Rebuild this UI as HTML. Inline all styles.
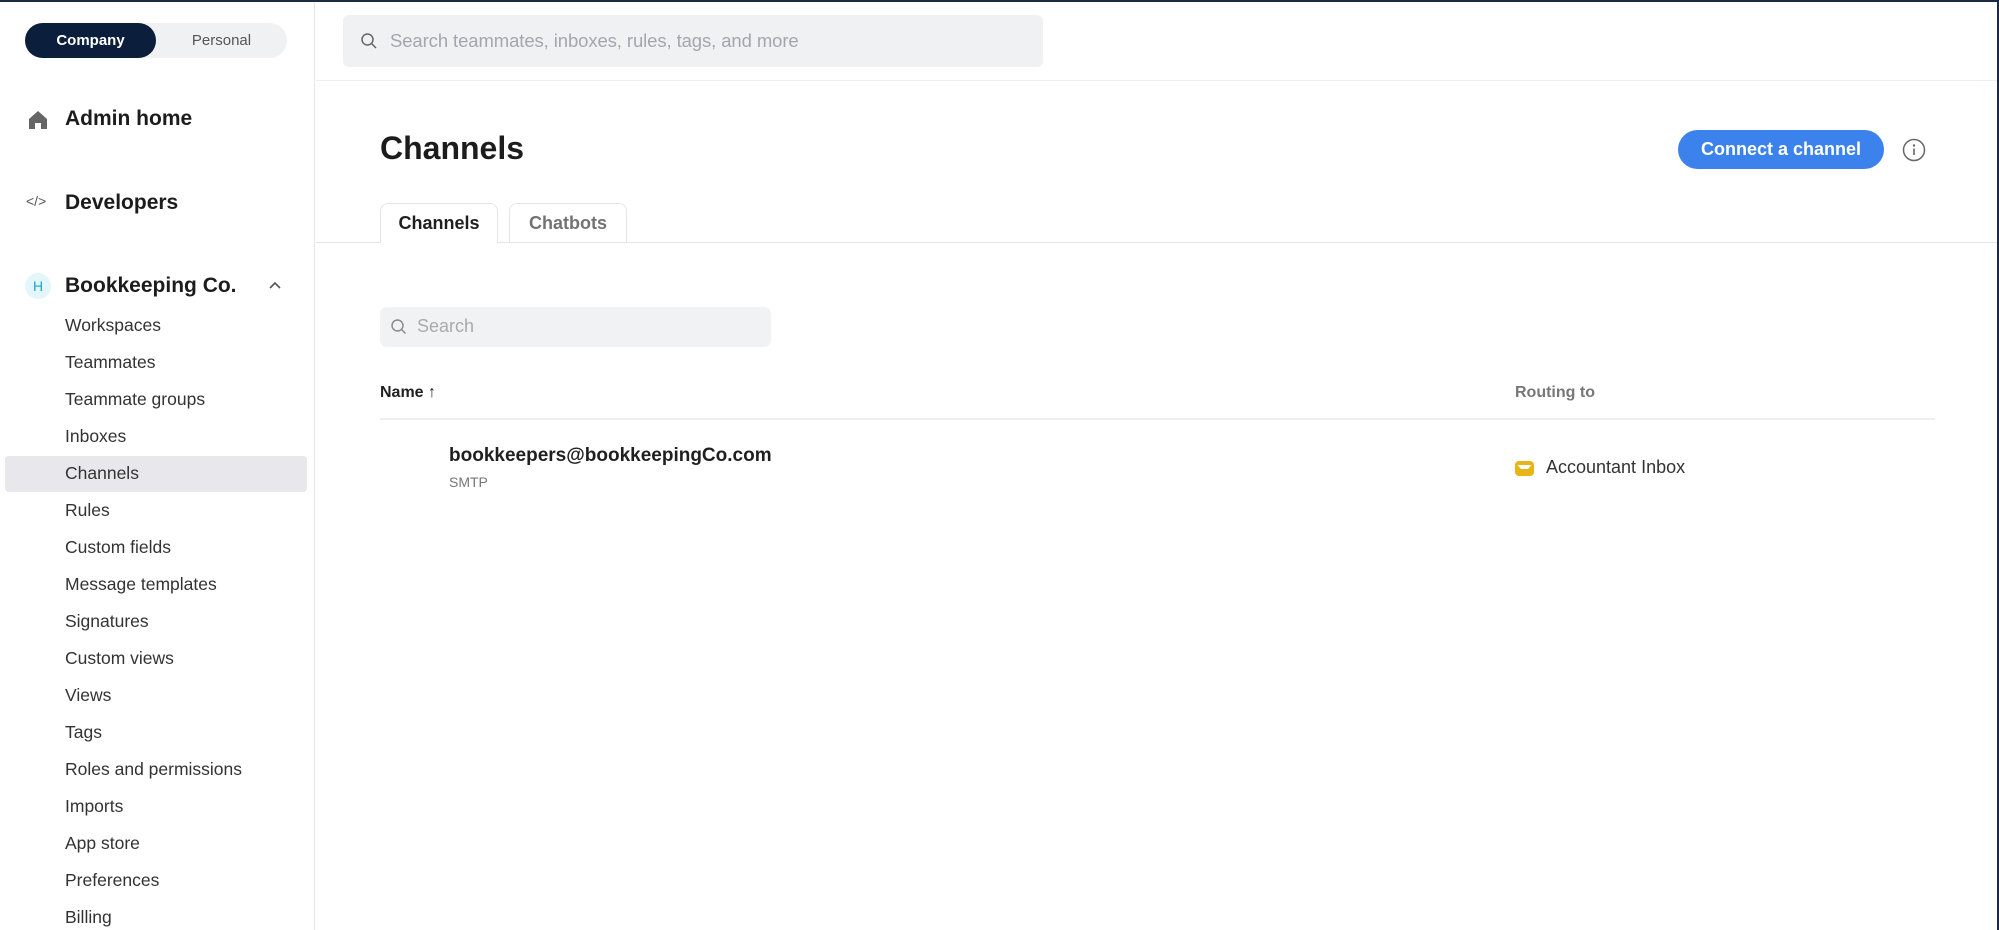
<!DOCTYPE html>
<html><head><meta charset="utf-8"><style>
*{box-sizing:border-box;margin:0;padding:0}
body{width:1999px;height:930px;overflow:hidden;background:#fff;font-family:"Liberation Sans",sans-serif;color:#1f1f1f;position:relative}
.abs{position:absolute}
.side{position:absolute;left:0;top:0;width:315px;height:930px;border-right:1px solid #e6e7ea}
.toggle{left:25px;top:23px;width:262px;height:35px;background:#f0f1f3;border-radius:18px}
.toggle .on{position:absolute;left:0;top:0;width:131px;height:35px;background:#0b1f3d;color:#fff;border-radius:18px;font-size:15px;font-weight:bold;text-align:center;line-height:35px}
.toggle .off{position:absolute;left:131px;top:0;width:131px;height:35px;color:#555;font-size:15px;text-align:center;line-height:35px}
.big{font-size:21px;font-weight:bold;color:#1c1c1c}
.sub{position:absolute;left:65px;font-size:17.5px;color:#333}
.hl{left:5px;top:456px;width:302px;height:36px;background:#e8e8ec;border-radius:4px}
</style></head><body>
<div class="side">
<div class="abs toggle"><div class="on">Company</div><div class="off">Personal</div></div>
<svg class="abs" style="left:27px;top:109px" width="22" height="22" viewBox="0 0 22 22"><path d="M2 10 L11 2 L20 10 V20 H14 V14 H8 V20 H2Z" fill="#666"/></svg>
<div class="abs big" style="left:65px;top:107px">Admin home</div>
<div class="abs" style="left:26px;top:193px;font-size:14px;color:#555">&lt;/&gt;</div>
<div class="abs big" style="left:65px;top:191px">Developers</div>
<div class="abs" style="left:25px;top:273px;width:26px;height:26px;border-radius:13px;background:#e2f6fb;color:#1fa6c4;font-size:14px;text-align:center;line-height:26px">H</div>
<div class="abs big" style="left:65px;top:274px">Bookkeeping Co.</div>
<svg class="abs" style="left:268px;top:280px" width="14" height="10"><path d="M2 8 L7 3 L12 8" stroke="#555" stroke-width="1.6" fill="none"/></svg>
<div class="abs hl"></div>
<div class="sub" style="top:315px">Workspaces</div>
<div class="sub" style="top:352px">Teammates</div>
<div class="sub" style="top:389px">Teammate groups</div>
<div class="sub" style="top:426px">Inboxes</div>
<div class="sub" style="top:463px">Channels</div>
<div class="sub" style="top:500px">Rules</div>
<div class="sub" style="top:537px">Custom fields</div>
<div class="sub" style="top:574px">Message templates</div>
<div class="sub" style="top:611px">Signatures</div>
<div class="sub" style="top:648px">Custom views</div>
<div class="sub" style="top:685px">Views</div>
<div class="sub" style="top:722px">Tags</div>
<div class="sub" style="top:759px">Roles and permissions</div>
<div class="sub" style="top:796px">Imports</div>
<div class="sub" style="top:833px">App store</div>
<div class="sub" style="top:870px">Preferences</div>
<div class="sub" style="top:907px">Billing</div>
</div>
<div class="abs" style="left:343px;top:15px;width:700px;height:52px;background:#f0f1f3;border-radius:6px"></div>
<svg class="abs" style="left:360px;top:32px" width="18" height="18"><circle cx="7.5" cy="7.5" r="5.5" stroke="#666" stroke-width="1.5" fill="none"/><path d="M11.5 11.5 L16 16" stroke="#666" stroke-width="1.5"/></svg>
<div class="abs" style="left:390px;top:30px;font-size:18.5px;color:#a3a6ad;letter-spacing:-0.1px">Search teammates, inboxes, rules, tags, and more</div>
<div class="abs" style="left:316px;top:80px;width:1681px;height:1px;background:#eceef0"></div>
<div class="abs" style="left:380px;top:130px;font-size:32px;font-weight:bold;color:#1c1c1c">Channels</div>
<div class="abs" style="left:1678px;top:130px;width:206px;height:39px;border-radius:20px;background:#3b82ec;color:#fff;font-size:18px;font-weight:bold;text-align:center;line-height:39px">Connect a channel</div>
<svg class="abs" style="left:1902px;top:138px" width="24" height="24"><circle cx="12" cy="12" r="10.5" stroke="#666" stroke-width="1.5" fill="none"/><circle cx="12" cy="7.5" r="1.2" fill="#666"/><path d="M12 10.5 V17" stroke="#666" stroke-width="1.6"/></svg>
<div class="abs" style="left:316px;top:242px;width:1681px;height:1px;background:#e4e5e8"></div>
<div class="abs" style="left:380px;top:203px;width:118px;height:40px;border:1px solid #e4e5e8;border-bottom:none;border-radius:8px 8px 0 0;background:#fff;font-size:18px;font-weight:bold;text-align:center;line-height:38px;color:#1f1f1f">Channels</div>
<div class="abs" style="left:509px;top:203px;width:118px;height:39px;border:1px solid #e4e5e8;border-bottom:none;border-radius:8px 8px 0 0;font-size:18px;font-weight:bold;text-align:center;line-height:38px;color:#737373">Chatbots</div>
<div class="abs" style="left:380px;top:307px;width:391px;height:40px;background:#f1f2f4;border-radius:7px"></div>
<svg class="abs" style="left:390px;top:318px" width="18" height="18"><circle cx="7.5" cy="7.5" r="5.5" stroke="#888" stroke-width="1.4" fill="none"/><path d="M11.5 11.5 L15.5 15.5" stroke="#888" stroke-width="1.4"/></svg>
<div class="abs" style="left:417px;top:316px;font-size:18px;color:#aaa">Search</div>
<div class="abs" style="left:380px;top:384px;font-size:16px;font-weight:bold;color:#1f1f1f">Name ↑</div>
<div class="abs" style="left:1515px;top:384px;font-size:16px;font-weight:bold;color:#777">Routing to</div>
<div class="abs" style="left:380px;top:418px;width:1555px;height:2px;background:#eceef0"></div>
<div class="abs" style="left:449px;top:445px;font-size:19px;font-weight:bold;color:#1f1f1f">bookkeepers@bookkeepingCo.com</div>
<div class="abs" style="left:449px;top:474px;font-size:14px;color:#777">SMTP</div>
<svg class="abs" style="left:1515px;top:461px" width="19" height="15"><rect x="0" y="0" width="19" height="15" rx="4" fill="#e7b518"/><path d="M2.5 4 H16.5 L13 8 H6 Z" fill="#fff"/></svg>
<div class="abs" style="left:1546px;top:457px;font-size:18px;color:#333">Accountant Inbox</div>
<div class="abs" style="left:0;top:0;width:1999px;height:2px;background:#1d2a44"></div>
<div class="abs" style="left:1997px;top:0;width:2px;height:930px;background:#1d2a44"></div>
</body></html>
